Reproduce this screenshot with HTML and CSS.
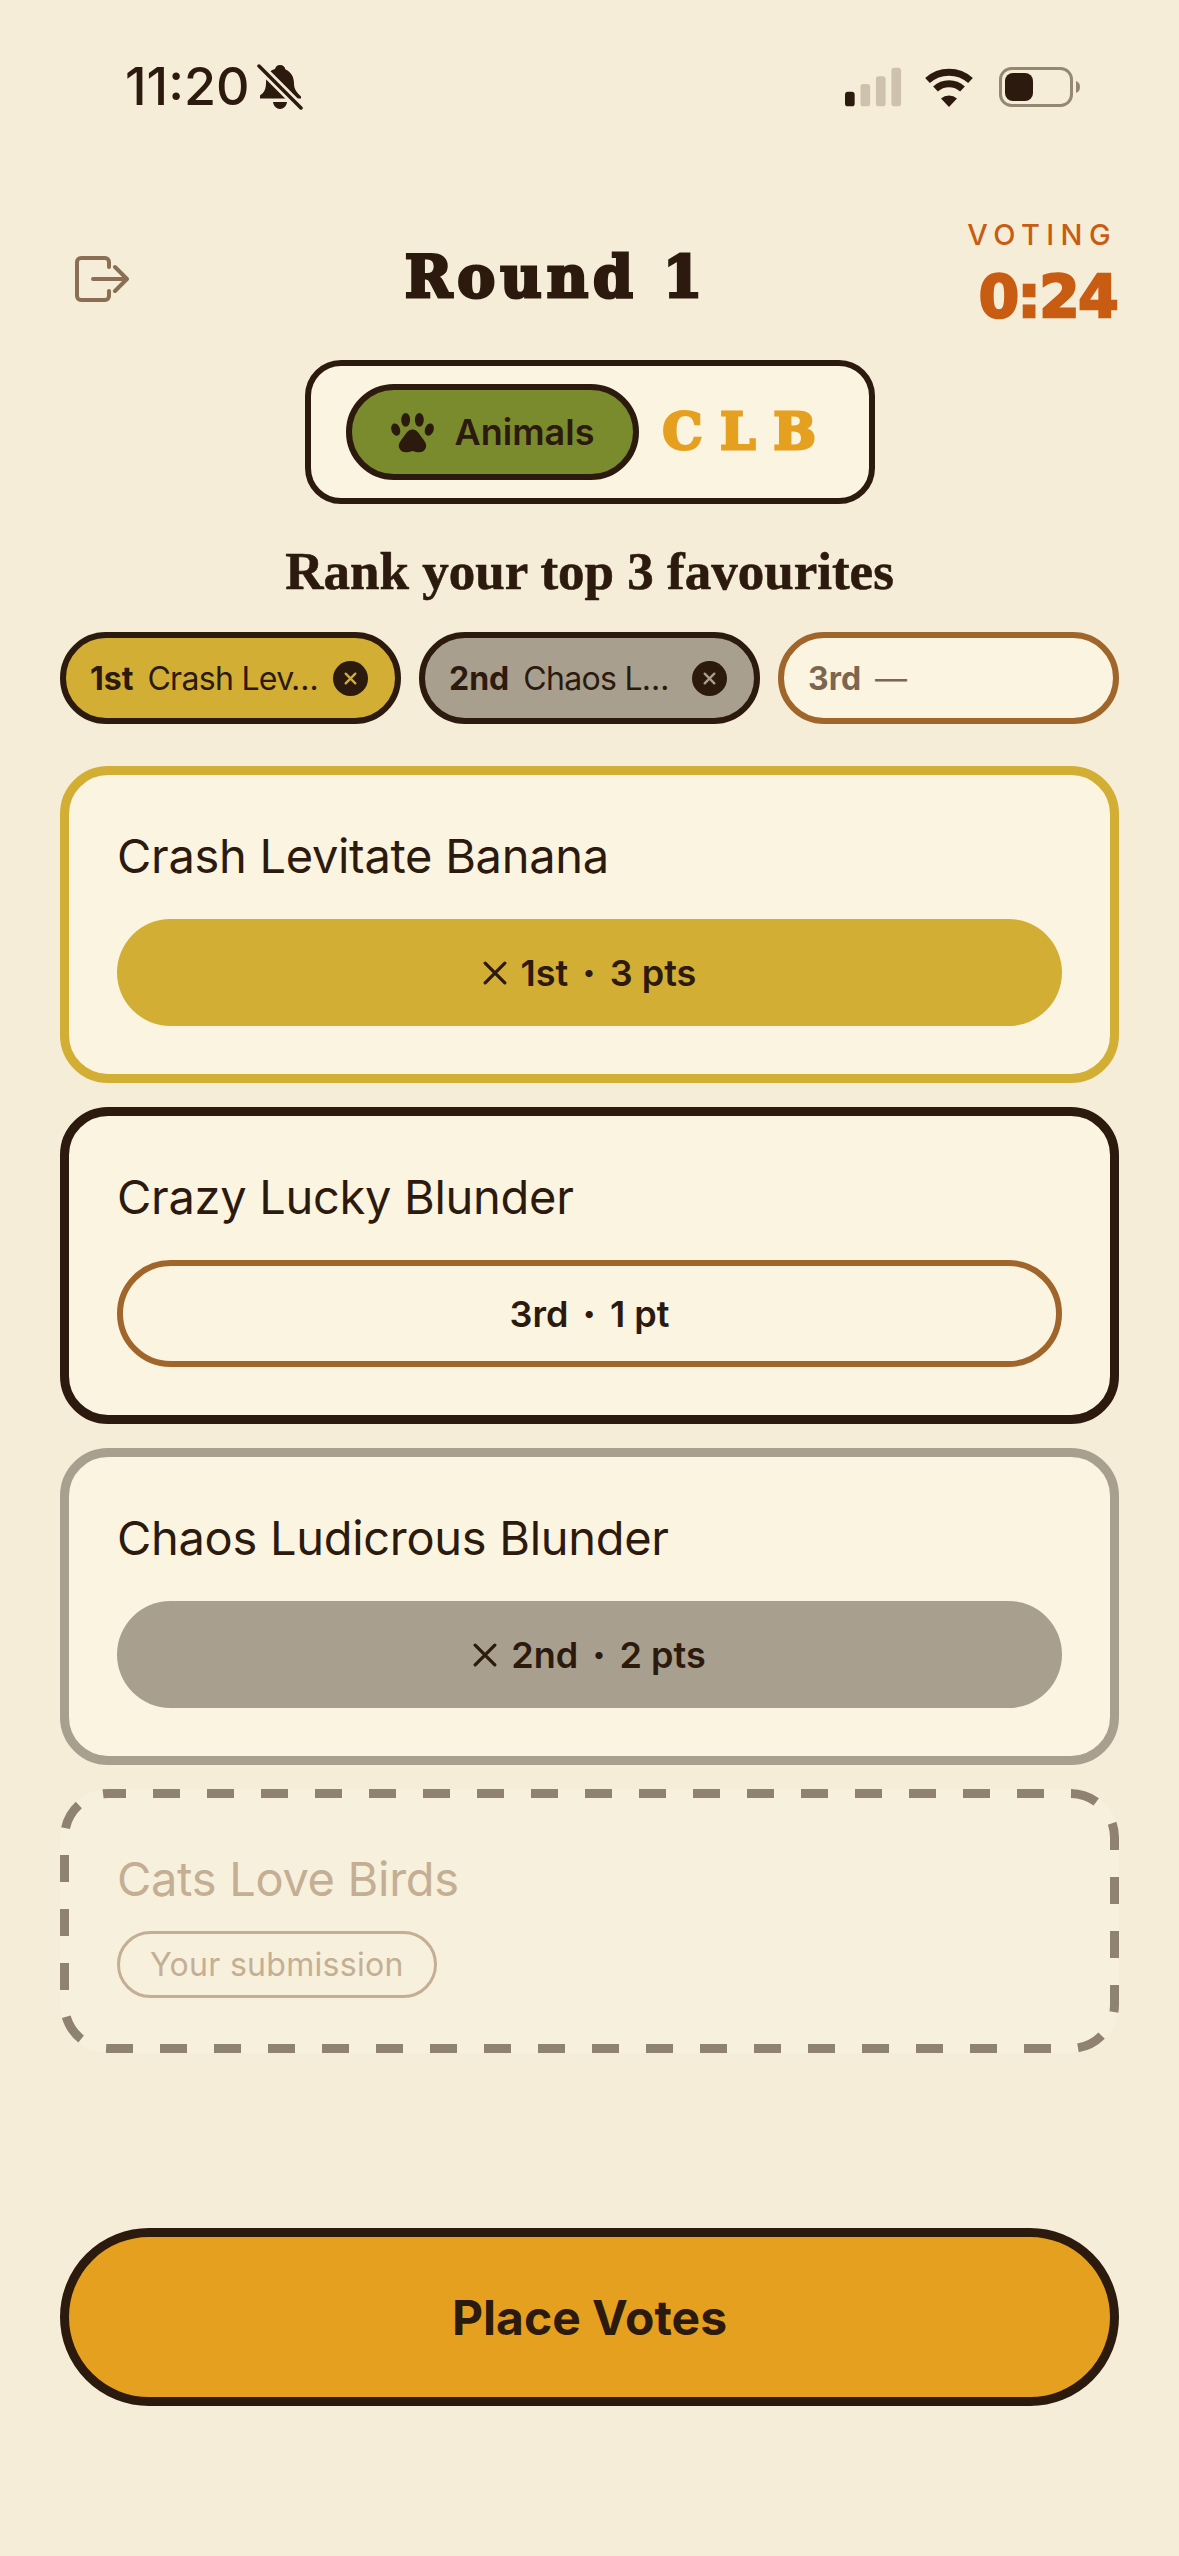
FILE: index.html
```html
<!DOCTYPE html>
<html lang="en">
<head>
<meta charset="utf-8">
<title>Round 1</title>
<link rel="stylesheet" href="styles.css">
</head>
<body>
<main class="screen">
  <div class="status">
    <div class="status-left">
      <span class="time">11:20</span>
      <svg class="bell" viewBox="0 0 46 46" aria-hidden="true"><path d="M23 1c3 0 5 2 5.500 4.500 6 2.500 8.500 8 8.500 14 0 6 3 9 7 13v2H3v-3c4-3 6-6 6-13 0-7 3-12 9-13.500C18.500 3 20 1 23 1z" fill="#2c1a0e"/><path d="M16 38h14c-.5 4-3.500 7-7 7s-6.500-3-7-7z" fill="#2c1a0e"/><path d="M0 0 46 46" stroke="#f5edd8" stroke-width="9"/><path d="M2 2 44 44" stroke="#2c1a0e" stroke-width="3.500" stroke-linecap="round"/></svg>
    </div>
    <div class="status-right">
      <svg class="signal" viewBox="0 0 60 40" aria-hidden="true"><rect x="0" y="25" width="10" height="15" rx="3" fill="#2c1a0e"/><rect x="16" y="17" width="10" height="23" rx="3" fill="#cfc2ac"/><rect x="32" y="9" width="10" height="31" rx="3" fill="#cfc2ac"/><rect x="48" y="0" width="10" height="40" rx="3" fill="#cfc2ac"/></svg>
      <svg class="wifi" viewBox="0 0 50 40" aria-hidden="true"><path d="M3.500 13.500a32 32 0 0 1 43 0" fill="none" stroke="#2c1a0e" stroke-width="7"/><path d="M11.500 22a20 20 0 0 1 27 0" fill="none" stroke="#2c1a0e" stroke-width="7"/><path d="M25 40 17 31.500a12 12 0 0 1 16 0z" fill="#2c1a0e"/></svg>
      <svg class="battery" viewBox="0 0 82 40" aria-hidden="true"><rect x="1.500" y="1.500" width="71" height="37" rx="11" fill="none" stroke="#958873" stroke-width="3"/><rect x="6" y="6" width="28" height="28" rx="8" fill="#2c1a0e"/><path d="M77 14c3 1 4 3 4 6s-1 5-4 6z" fill="#958873"/></svg>
    </div>
  </div>

  <header class="topbar">
    <svg class="logout" viewBox="0 0 54 46" aria-hidden="true"><path d="M34 11V6a4 4 0 0 0-4-4H6a4 4 0 0 0-4 4v34a4 4 0 0 0 4 4h24a4 4 0 0 0 4-4v-5" fill="none" stroke="#8a6f55" stroke-width="4" stroke-linecap="round"/><path d="M18 23h33M40 11l12 12-12 12" fill="none" stroke="#8a6f55" stroke-width="4" stroke-linecap="round" stroke-linejoin="round"/></svg>
    <h1 class="title">Round 1</h1>
    <div class="timer">
      <span class="timer-label">VOTING</span>
      <span class="timer-value">0:24</span>
    </div>
  </header>

  <div class="badge-row">
    <div class="badge">
      <div class="category">
        <svg class="paw" viewBox="0 0 44 42" aria-hidden="true"><ellipse cx="15" cy="8" rx="4.600" ry="7" fill="#2c1a0e"/><ellipse cx="29" cy="8" rx="4.600" ry="7" fill="#2c1a0e"/><ellipse cx="4.800" cy="18" rx="4.400" ry="6.500" transform="rotate(-18 4.800 18)" fill="#2c1a0e"/><ellipse cx="39.200" cy="18" rx="4.400" ry="6.500" transform="rotate(18 39.200 18)" fill="#2c1a0e"/><path d="M22 18c5 0 7 5 11 10 3 4 4 7 2 10-2 4-7 4-13 2-6 2-11 2-13-2-2-3-1-6 2-10 4-5 6-10 11-10z" fill="#2c1a0e"/></svg>
        <span>Animals</span>
      </div>
      <span class="code">CLB</span>
    </div>
  </div>

  <h2 class="prompt">Rank your top 3 favourites</h2>

  <div class="chips">
    <div class="chip chip-first">
      <b>1st</b><span class="chip-name">Crash Lev…</span>
      <span class="chip-x"><svg viewBox="0 0 14 14" aria-hidden="true"><path d="M2.500 2.500l9 9M11.500 2.500l-9 9" stroke="#d3ae35" stroke-width="2.200" stroke-linecap="round"/></svg></span>
    </div>
    <div class="chip chip-second">
      <b>2nd</b><span class="chip-name">Chaos L…</span>
      <span class="chip-x"><svg viewBox="0 0 14 14" aria-hidden="true"><path d="M2.500 2.500l9 9M11.500 2.500l-9 9" stroke="#a89f8e" stroke-width="2.200" stroke-linecap="round"/></svg></span>
    </div>
    <div class="chip chip-empty">
      <b>3rd</b><span class="chip-name">—</span>
    </div>
  </div>

  <section class="cards">
    <article class="card card-gold">
      <p class="card-name">Crash Levitate Banana</p>
      <div class="pick pick-gold">
        <svg class="pick-x" viewBox="0 0 22 22" aria-hidden="true"><path d="M2 2l18 18M20 2 2 20" stroke="#2c1a0e" stroke-width="3" stroke-linecap="round"/></svg>
        <span>1st</span><span class="dot">·</span><span>3 pts</span>
      </div>
    </article>
    <article class="card card-dark">
      <p class="card-name">Crazy Lucky Blunder</p>
      <div class="pick pick-bronze">
        <span>3rd</span><span class="dot">·</span><span>1 pt</span>
      </div>
    </article>
    <article class="card card-silver">
      <p class="card-name">Chaos Ludicrous Blunder</p>
      <div class="pick pick-silver">
        <svg class="pick-x" viewBox="0 0 22 22" aria-hidden="true"><path d="M2 2l18 18M20 2 2 20" stroke="#2c1a0e" stroke-width="3" stroke-linecap="round"/></svg>
        <span>2nd</span><span class="dot">·</span><span>2 pts</span>
      </div>
    </article>
    <article class="card card-own">
      <svg class="own-dash" viewBox="0 0 1059 264" aria-hidden="true"><rect x="4.500" y="4.500" width="1050" height="255" rx="44" fill="none" stroke="#8f8270" stroke-width="9" stroke-dasharray="27 27" stroke-dashoffset="9.500"/></svg>
      <p class="card-name">Cats Love Birds</p>
      <span class="own-tag">Your submission</span>
    </article>
  </section>

  <button class="submit" type="button">Place Votes</button>
</main>
</body>
</html>
```
FILE: styles.css
```css
* { box-sizing: border-box; }
html, body { margin: 0; padding: 0; }
body {
  width: 1179px;
  height: 2556px;
  background: #f5edd8;
  color: #2c1a0e;
  font-family: "Inter", sans-serif;
  overflow: hidden;
}
.screen { display: flex; flex-direction: column; height: 2556px; padding: 0 60px; }
.status {
  display: flex; justify-content: space-between; align-items: center;
  height: 42px; margin: 66px 38px 0 65px;
}
.status-left { display: flex; align-items: center; gap: 7px; }
.time { font-size: 52px; font-weight: 500; line-height: 42px; }
.bell { width: 46px; height: 46px; }
.status-right { display: flex; align-items: center; }
.signal { width: 58px; height: 40px; margin-right: 21px; }
.wifi { width: 50px; height: 40px; margin-right: 25px; }
.battery { width: 82px; height: 40px; }

.topbar {
  display: flex; justify-content: space-between; align-items: flex-start;
  margin: 112px 2px 0 15px; height: 114px;
}
.logout { width: 54px; height: 46px; margin-top: 36px; }
.title {
  margin: 25px 0 0 16px; font-family: "DejaVu Serif", serif; font-weight: 700;
  font-size: 57px; line-height: 64px; letter-spacing: 5px;
  -webkit-text-stroke: 3px #2c1a0e;
}
.timer { display: flex; flex-direction: column; align-items: flex-end; color: #c85c12; }
.timer-label { font-size: 29px; font-weight: 500; letter-spacing: 6.400px; line-height: 30px; }
.timer-value {
  font-family: "DejaVu Sans", sans-serif; font-weight: 700; font-size: 58px; line-height: 66px;
  margin-top: 14px; letter-spacing: -1.500px; -webkit-text-stroke: 2.500px #c85c12;
}

.badge-row { display: flex; justify-content: center; margin-top: 26px; }
.badge {
  display: flex; align-items: center; height: 144px; width: 570px;
  padding: 0 30px 0 35px; gap: 24px;
  background: #fbf4e1; border: 6px solid #2c1a0e; border-radius: 36px;
}
.category {
  display: flex; flex: none; align-items: center; gap: 21px;
  width: 293px; height: 96px; padding-left: 39px;
  background: #7a8b2e; border: 6px solid #2c1a0e; border-radius: 48px;
  font-size: 36px; font-weight: 600;
}
.paw { width: 43px; height: 41px; }
.code {
  font-family: "DejaVu Serif", serif; font-weight: 700; font-size: 50px; line-height: 60px;
  letter-spacing: 18px; color: #e6a020; -webkit-text-stroke: 3px #e6a020;
}

.prompt {
  margin: 36px 0 0; text-align: center; font-family: "Liberation Serif", serif;
  font-weight: 700; font-size: 53px; line-height: 62px; -webkit-text-stroke: 0.6px #2c1a0e;
}
.chips { display: flex; gap: 18px; margin-top: 30px; }
.chip {
  flex: 1 1 0; display: flex; align-items: center; height: 92px;
  padding: 0 27px 0 24px; border: 6px solid #2c1a0e; border-radius: 46px;
  font-size: 32px; white-space: nowrap;
}
.chip b { font-weight: 700; margin-right: 14px; }
.chip-name { flex: 1 1 auto; font-weight: 400; letter-spacing: -0.700px; }
.chip-first { background: #d3ae35; }
.chip-second { background: #a89f8e; }
.chip-empty { background: #fbf4e1; border-color: #a0652b; color: #7d6650; }
.chip-x {
  display: flex; align-items: center; justify-content: center; flex: none;
  width: 35px; height: 35px; border-radius: 50%; background: #2c1a0e;
}
.chip-x svg { width: 15px; height: 15px; }

.cards { display: flex; flex-direction: column; gap: 24px; margin-top: 42px; }
.card { position: relative; padding: 45px 48px 48px; border: 9px solid #2c1a0e; border-radius: 48px; background: #fbf4e1; height: 317px; }
.card-gold { border-color: #d3ae35; }
.card-silver { border-color: #a89f8e; }
.card-name { margin: 0 0 27px; font-size: 47px; line-height: 72px; font-weight: 400; letter-spacing: -0.300px; }
.pick {
  display: flex; align-items: center; justify-content: center; gap: 14px;
  height: 107px; border-radius: 54px; font-size: 36px; font-weight: 600;
}
.pick-x { width: 24px; height: 24px; }
.dot { font-weight: 900; }
.pick-gold { background: #d3ae35; }
.pick-silver { background: #a89f8e; }
.pick-bronze { border: 6px solid #a0652b; }
.card-own { height: 264px; padding: 54px 57px; border: 0; background: #f7f0dc; color: #c4ae94; }
.card-own .card-name { margin: 0 0 16px; }
.own-dash { position: absolute; left: 0; top: 0; width: 100%; height: 100%; }
.own-tag {
  display: inline-flex; align-items: center; height: 67px; padding: 0 30px;
  border: 3px solid #c4ae94; border-radius: 34px; font-size: 32px; letter-spacing: 0.300px;
}
.submit {
  display: block; width: 100%; height: 178px; margin-top: 175px;
  background: #e6a020; border: 9px solid #2c1a0e; border-radius: 89px; color: #2c1a0e;
  font-family: "Inter", sans-serif; font-size: 48px; font-weight: 700;
}
```
